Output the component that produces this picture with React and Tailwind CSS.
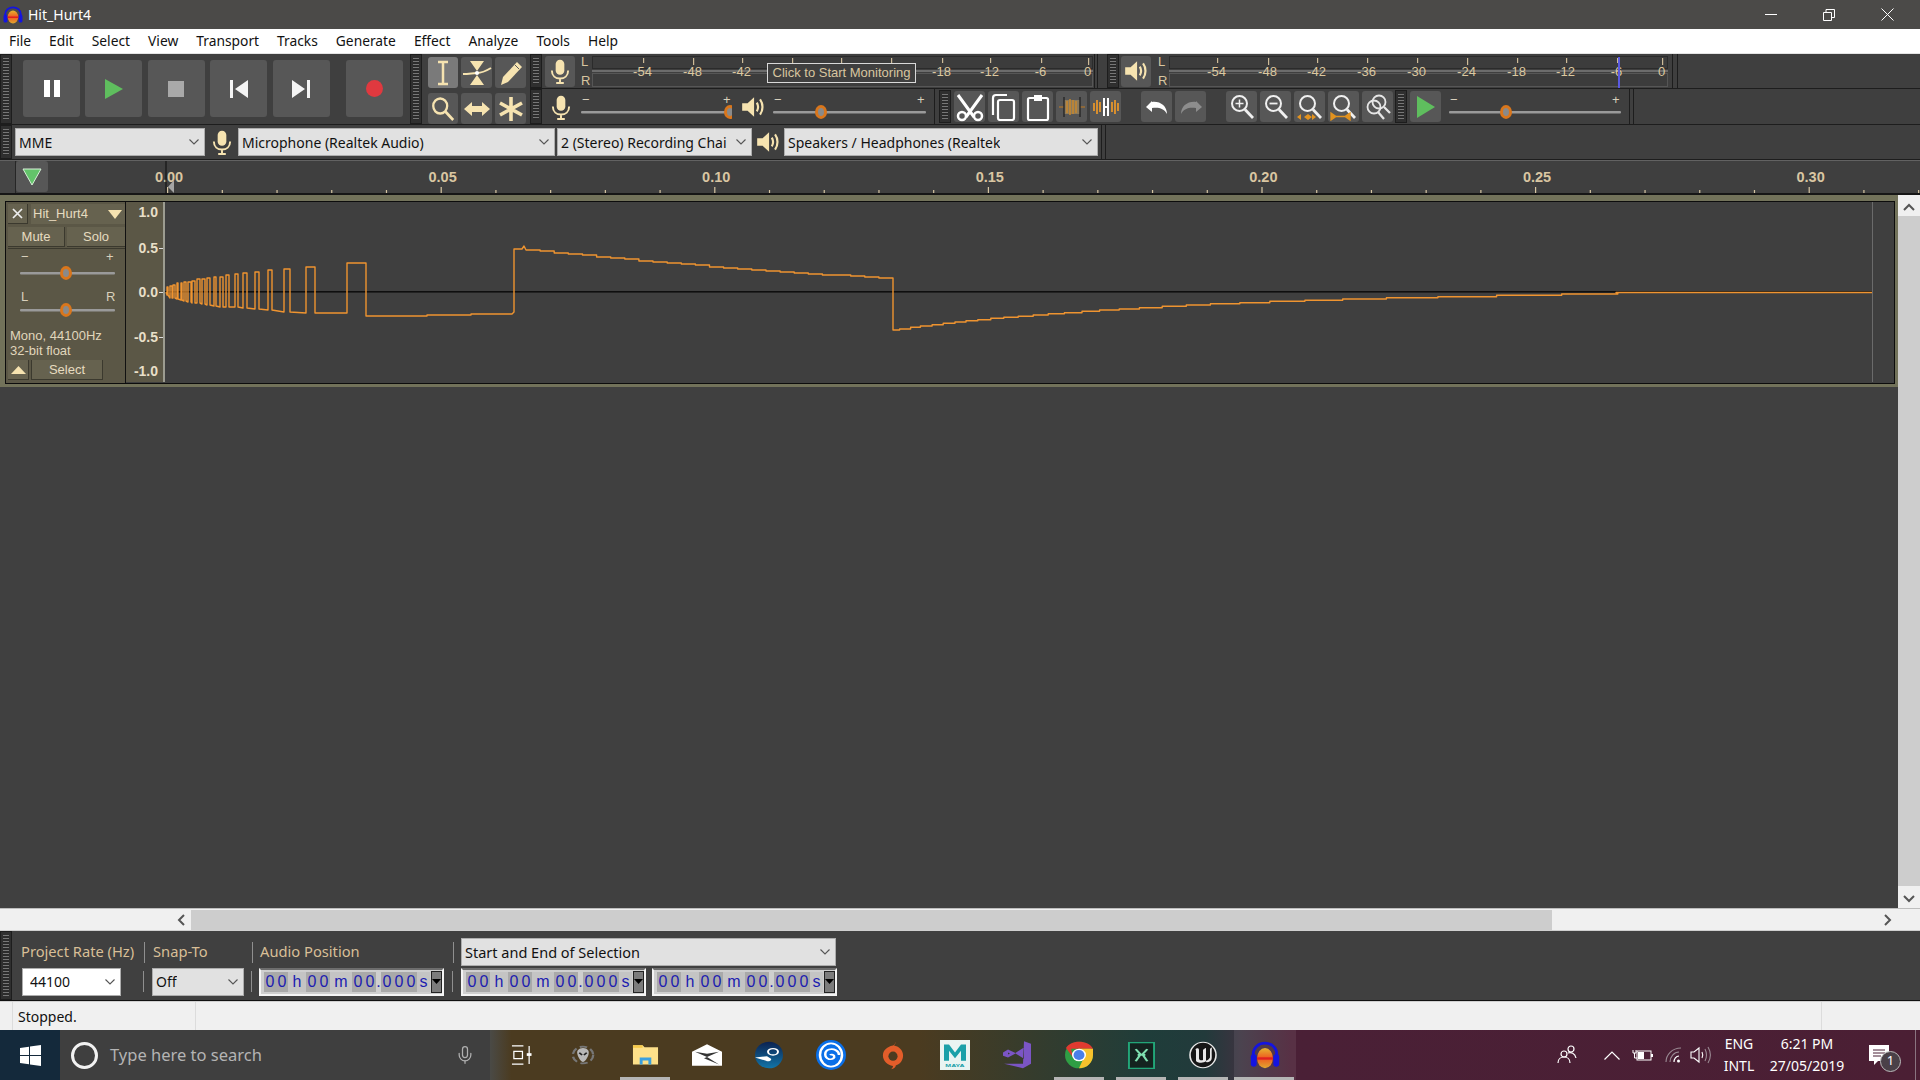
import React from "react";
import { Mic } from "lucide-react";

const NOTO = "font-['Noto_Sans',sans-serif]";
const ARIAL = "font-['Liberation_Sans',Arial,sans-serif]";
const CREAM = "#f6e3b0";
const TAN = "#dcc8a0";

function Grip({ h = "h-full" }) {
  return (
    <div className={`w-[12px] ${h} shrink-0 bg-[#2f2f2f] border border-[#1d1d1d] px-[2px] py-[3px]`}>
      <div className="w-full h-full bg-[repeating-linear-gradient(to_bottom,#777777_0,#777777_1px,#2b2b2b_1px,#2b2b2b_3px)]" />
    </div>
  );
}

function Btn({ w = "w-[31px]", h = "h-[31px]", on, className = "", children }) {
  return (
    <div className={`${w} ${h} shrink-0 rounded-[3px] flex items-center justify-center ${on ? "bg-[#7a7a7a]" : "bg-[#575757]"} ${className}`}>
      {children}
    </div>
  );
}

function I({ s = 24, w, h, vb = "0 0 24 24", children }) {
  return <svg width={w || s} height={h || s} viewBox={vb} preserveAspectRatio="none" className="block shrink-0">{children}</svg>;
}

const MicIcon = ({ c = CREAM, s = 26 }) => (
  <I s={s}>
    <rect x="8" y="1.5" width="8" height="14" rx="4" fill={c} />
    <path d="M4.5 11.5c0 5 3.5 7.5 7.5 7.5s7.5-2.5 7.5-7.5M12 19v4M8.5 23h7" fill="none" stroke={c} strokeWidth="1.8" />
  </I>
);

const SpeakerIcon = ({ s = 26 }) => (
  <I s={s}>
    <path d="M2 8.5h5L13 3v18l-6-5.5H2z" fill={CREAM} />
    <path d="M15.5 8c1.5 2.5 1.5 5.500 0 8M18.500 5c3 4 3 10 0 14" fill="none" stroke={CREAM} strokeWidth="2" />
  </I>
);

const Chevron = ({ c = "#555" }) => (
  <svg width="10" height="6" viewBox="0 0 10 6" className="block shrink-0"><path d="M.5.5 5 5 9.500.5" fill="none" stroke={c} strokeWidth="1.100" /></svg>
);

function Combo({ w, text, bg = "bg-[#e1e1e1]", font = "text-[14px]", border = "border-[#adadad]", pr = "pr-[5px]", pl = "pl-[3px]", h = "h-[28px]" }) {
  return (
    <div className={`${w} ${h} ${bg} ${pl} ${pr} border ${border} flex items-center justify-between shrink-0 ${NOTO} ${font} text-[#111]`}>
      <span className="whitespace-nowrap overflow-hidden">{text}</span>
      <Chevron />
    </div>
  );
}

function Slider({ w, t, left = "−", right = "+", lh = 35, line = 23, ly = 10 }) {
  return (
    <svg width={w} height={lh} viewBox={`0 0 ${w} ${lh}`} className="block shrink-0">
      <rect x="0" y={line - 1} width={w} height="2.500" rx="1" fill="#9a9a9a" />
      <text x="1" y={ly + 5} fontSize="13" fill="#d8d0bc" fontFamily="Liberation Sans">{left}</text>
      <text x={w - 9} y={ly + 5} fontSize="13" fill="#d8d0bc" fontFamily="Liberation Sans">{right}</text>
      <ellipse cx={t} cy={line} rx="4.500" ry="5.500" fill="#8a8a8a" stroke="#d9761c" strokeWidth="3" />
    </svg>
  );
}

function Meter({ w, x0, ticks, hide = [], children }) {
  const labels = ["-54", "-48", "-42", "-36", "-30", "-24", "-18", "-12", "-6", "0"];
  return (
    <div className="relative shrink-0" style={{ width: w, height: 34 }}>
      <svg width={w} height="34" viewBox={`0 0 ${w} 34`} className="block">
        <rect x="0.500" y="2.500" width={w - 1} height="12" fill="#3c3c3c" stroke="#2b2b2b" />
        <rect x="0.500" y="19.500" width={w - 1} height="13" fill="#3c3c3c" stroke="#565656" />
        <rect x="0" y="16" width={w} height="2" fill="#6c6c6c" />
        {ticks.map((x, i) => (
          <g key={i}>
            <rect x={x - x0} y="4" width="1.200" height={i === 1 || i === 5 || i === 9 ? 7 : 5} fill="#cdbb98" />
            {hide.includes(i) ? null : <text x={x - x0 - 0.500} y="22" fontSize="13" textAnchor="middle" fill={TAN} fontFamily="Liberation Sans">{labels[i]}</text>}
          </g>
        ))}
      </svg>
      {children}
    </div>
  );
}

const LR = () => (
  <div className={`w-[14px] pl-[3px] h-[34px] flex flex-col justify-between text-[13px] leading-[15px] text-[#d8c6a0] ${ARIAL} shrink-0`}>
    <span>L</span><span>R</span>
  </div>
);

function Mag({ children }) {
  return (
    <svg width="28" height="28" viewBox="0 0 28 28" className="block">
      <circle cx="11.500" cy="10.500" r="7.500" fill="none" stroke="#f0f0f0" strokeWidth="2" />
      <path d="M17 16.500 25 25" stroke="#f0f0f0" strokeWidth="2.800" />
      {children}
    </svg>
  );
}

function Top() {
  return (
    <div className="flex h-[71px] bg-[#3f3f3f] border-b border-[#1d1d1d]">
      <Grip />
      <div className="w-[398px] flex pt-[6px] pl-[11px] shrink-0">
        <div className="flex gap-[5.400px]">
          <Btn w="w-[57px]" h="h-[57px]"><div className="flex gap-[4px]"><div className="w-[6px] h-[17px] bg-white" /><div className="w-[6px] h-[17px] bg-white" /></div></Btn>
          <Btn w="w-[57px]" h="h-[57px]"><I w={18} h={20} vb="0 0 18 20"><path d="M0 0 18 10 0 20z" fill="#5fbe5e" /></I></Btn>
          <Btn w="w-[57px]" h="h-[57px]"><div className="w-[16px] h-[16px] bg-[#a9a9a9]" /></Btn>
          <Btn w="w-[57px]" h="h-[57px]"><I w={18} h={18} vb="0 0 18 18"><path d="M0 0h3v18H0zM18 0v18L5 9z" fill="#f4f4f4" /></I></Btn>
          <Btn w="w-[57px]" h="h-[57px]"><I w={18} h={18} vb="0 0 18 18"><path d="M15 0h3v18h-3zM0 0v18L13 9z" fill="#f4f4f4" /></I></Btn>
        </div>
        <Btn w="w-[57px]" h="h-[57px]" className="ml-[16px]"><div className="w-[17px] h-[17px] rounded-full bg-[#e0393f]" /></Btn>
      </div>
      <Grip />
      <div className="w-[108px] shrink-0 pl-[6px] pt-[3px] grid grid-cols-[30px_31px_31px] gap-x-[3px] gap-y-[5px] content-start">
        <Btn w="w-[30px]" on><I w={22} h={28} vb="0 0 22 28"><path d="M6 3h10M6 25h10M11 3v22" stroke={CREAM} strokeWidth="2.500" fill="none" /></I></Btn>
        <Btn><I w={30} h={28} vb="0 0 30 28"><path d="M8 2h14l-7 10zM8 26h14l-7-10z" fill={CREAM} /><path d="M1 15c6 0 10-1 14-1s9-2 14-5" stroke={CREAM} strokeWidth="2" fill="none" /><circle cx="15" cy="14" r="2" fill="#fff" /></I></Btn>
        <Btn><I w={28} h={28} vb="0 0 28 28"><path d="M20 3l5 5L11 23l-7 3 2-8z" fill={CREAM} /><path d="M18 6l4 4" stroke="#575757" strokeWidth="1" /></I></Btn>
        <Btn w="w-[30px]"><I w={26} h={28} vb="0 0 28 28"><circle cx="11" cy="11" r="7.500" fill="none" stroke={CREAM} strokeWidth="2.500" /><path d="M16.500 16.500 25 25" stroke={CREAM} strokeWidth="3" /></I></Btn>
        <Btn><I w={28} h={20} vb="0 0 28 20"><path d="M1 10l8-7v4h10V3l8 7-8 7v-4H9v4z" fill={CREAM} /></I></Btn>
        <Btn><I w={28} h={28} vb="0 0 28 28"><path d="M14 2v24M3 8l22 12M25 8 3 20" stroke={CREAM} strokeWidth="3.600" /></I></Btn>
      </div>
      <div className="flex-1 flex flex-col min-w-0">
        <div className="h-[35px] flex items-center border-b border-[#1d1d1d]">
          <Grip />
          <Btn w="w-[30px]" h="h-[31px]" className="ml-[3px]"><MicIcon /></Btn>
          <div className="ml-[3px]"><LR /></div>
          <Meter w={501} x0={592} hide={[3, 4, 5]} ticks={[643, 693, 742, 792, 841, 891, 942, 990, 1041, 1088]}>
            <div className={`absolute left-[175px] top-[9px] w-[149px] h-[20px] bg-[#3f3f3f] border-[1.500px] border-[#d8d8d8] flex items-center justify-center text-[13px] text-[#d8c6a0] whitespace-nowrap ${ARIAL}`}>Click to Start Monitoring</div>
          </Meter>
          <div className="w-[4px] h-full ml-[1px] border-x border-[#1d1d1d]" />
          <div className="ml-[9px] h-full"><Grip /></div>
          <Btn w="w-[30px]" h="h-[31px]" className="ml-[2px]"><SpeakerIcon /></Btn>
          <div className="ml-[4px]"><LR /></div>
          <Meter w={499} x0={1170} ticks={[1218, 1269, 1318, 1368, 1418, 1468, 1518, 1567, 1618, 1663]}>
            <div className="absolute left-[449px] top-[3px] w-[1.500px] h-[31px] bg-[#5a5ae0]" />
          </Meter>
          <div className="w-[6px] h-full ml-[4px] border-x border-[#1d1d1d]" />
        </div>
        <div className="flex-1 flex items-center min-h-0">
          <Grip />
          <div className="w-[40px] flex justify-center ml-[-1px] shrink-0"><MicIcon /></div>
          <Slider w={151} t={149} />
          <div className="w-[41px] flex justify-center shrink-0"><SpeakerIcon /></div>
          <Slider w={153} t={48} />
          <div className="w-[1px] h-full ml-[8px] bg-[#1d1d1d]" />
          <div className="ml-[4px]"><Grip h="h-[33px]" /></div>
          <div className="ml-[3px] flex gap-[3px]">
            <Btn><I s={30} vb="0 0 30 30"><path d="M3 3l16 22M27 3 11 25" stroke="#fff" strokeWidth="3" /><circle cx="7" cy="24" r="4" fill="none" stroke="#fff" strokeWidth="2.500" /><circle cx="23" cy="24" r="4" fill="none" stroke="#fff" strokeWidth="2.500" /></I></Btn>
            <Btn><I s={28} vb="0 0 28 28"><path d="M17 2H6a3 3 0 0 0-3 3v17" fill="none" stroke="#fff" strokeWidth="2.200" /><rect x="8" y="7" width="16" height="20" rx="2" fill="none" stroke="#fff" strokeWidth="2.200" /></I></Btn>
            <Btn><I s={28} vb="0 0 28 28"><rect x="4" y="5" width="20" height="22" rx="1.500" fill="none" stroke="#fff" strokeWidth="2.200" /><rect x="10" y="2" width="8" height="6" fill="#fff" /></I></Btn>
            <Btn><I s={26} vb="0 0 26 26"><path d="M0 13h5M21 13h5" stroke="#c27a20" strokeWidth="1.200" /><rect x="5" y="6" width="16" height="14" fill="#8c7b5c" /><path d="M8 7v12M11 5v16M14 6v14M17 7v12" stroke="#c8882c" strokeWidth="1.500" /><path d="M5 3v20M21 3v20" stroke="#2a2a2a" strokeWidth="1.500" /></I></Btn>
            <Btn><I s={28} vb="0 0 28 28"><path d="M2 10v8M5 7v14M8 9v10M20 9v10M23 7v14M26 10v8" stroke="#e5952c" strokeWidth="1.800" /><path d="M12 5v18M16 5v18M12 14h4" stroke="#fff" strokeWidth="2" /></I></Btn>
          </div>
          <div className="ml-[20px] flex gap-[3px]">
            <Btn><I s={28} vb="0 0 28 28"><path d="M9 8 3 14l6 5v-4c6-1 12 0 15 6 0-8-7-13-15-12z" fill="#fff" /></I></Btn>
            <Btn><I s={28} vb="0 0 28 28"><path d="M19 8l6 6-6 5v-4c-6-1-12 0-15 6 0-8 7-13 15-12z" fill="#8d8d8d" /></I></Btn>
          </div>
          <div className="ml-[20px] flex gap-[3px]">
            <Btn><Mag><path d="M7.500 10.500h8M11.500 6.500v8" stroke="#f0f0f0" strokeWidth="1.500" /></Mag></Btn>
            <Btn><Mag><path d="M7.500 10.500h8" stroke="#f0f0f0" strokeWidth="1.800" /></Mag></Btn>
            <Btn><Mag><path d="M1 24l4-3v6zM20 24l-4-3v6zM8 24l4-3 4 3-4 3z" fill="#e3931f" /></Mag></Btn>
            <Btn><Mag><path d="M1 20v7l5-3.500zM20 20v7l-5-3.500zM5 23.500h11" fill="#e3931f" stroke="#e3931f" strokeWidth="1.300" /></Mag></Btn>
            <Btn><I s={28} vb="0 0 28 28"><circle cx="10" cy="14" r="6.500" fill="none" stroke="#e6e6e6" strokeWidth="1.800" /><circle cx="15" cy="9" r="6.500" fill="none" stroke="#e6e6e6" strokeWidth="1.800" /><path d="M14 19l6 7M20 14l6 6" stroke="#e6e6e6" strokeWidth="2.300" /></I></Btn>
          </div>
          <div className="ml-[2px]"><Grip h="h-[33px]" /></div>
          <Btn className="ml-[3px]"><I w={20} h={24} vb="0 0 20 24"><path d="M1 1 19 12 1 23z" fill="#5fbe5e" /></I></Btn>
          <div className="ml-[8px]"><Slider w={172} t={57} /></div>
          <div className="w-[5px] h-full ml-[8px] border-x border-[#1d1d1d]" />
        </div>
      </div>
    </div>
  );
}

function Devices() {
  return (
    <div className="h-[35px] flex items-center bg-[#3f3f3f] border-b border-[#1d1d1d]">
      <Grip />
      <div className="ml-[3px]"><Combo w="w-[190px]" text="MME" /></div>
      <div className="w-[33px] flex justify-center shrink-0"><MicIcon /></div>
      <Combo w="w-[317px]" text="Microphone (Realtek Audio)" />
      <div className="ml-[2px]"><Combo w="w-[195px]" text="2 (Stereo) Recording Chai" pr="pr-[5px]" /></div>
      <div className="w-[32px] flex justify-center shrink-0"><SpeakerIcon /></div>
      <Combo w="w-[314px]" text="Speakers / Headphones (Realtek" />
      <div className="w-[5px] h-full ml-[3px] border-x border-[#1d1d1d]" />
    </div>
  );
}

function Ruler() {
  const ticks = [];
  for (let i = 0; i < 33; i++) ticks.push(i);
  return (
    <div className="h-[35px] flex bg-[#3f3f3f] border-t border-[#626262] border-b-2 border-b-[#161616]">
      <div className="w-[16px] shrink-0 border-r border-[#262626] bg-[#454545]" />
      <Btn w="w-[32px]" h="h-[31px]" className="bg-[#555555]"><I w={22} h={18} vb="0 0 22 18"><path d="M2 1h18L11 17z" fill="#63c36a" stroke="#d8f0d8" strokeWidth="1" /></I></Btn>
      <svg width="1872" height="33" viewBox="48 0 1872 33" className="block shrink-0">
        {ticks.map((i) => {
          const x = 167 + i * 54.72;
          const major = i % 5 === 0;
          return <rect key={i} x={x} y={major ? 26 : 29} width="1.200" height={major ? 6 : 3} fill="#d6c5a2" />;
        })}
        {["0.00", "0.05", "0.10", "0.15", "0.20", "0.25", "0.30"].map((t, i) => (
          <text key={t} x={169 + i * 273.6} y="21" textAnchor="middle" fontSize="14.500" fontWeight="700" fill="#d9c6a2" fontFamily="Liberation Sans">{t}</text>
        ))}
        <rect x="165.500" y="0" width="1" height="33" fill="#0c0c0c" />
        <path d="M174 19v13l-6-6z" fill="#a5a5a5" />
      </svg>
    </div>
  );
}

function PBtn({ w, children, className = "" }) {
  return (
    <div className={`${w} shrink-0 h-[20px] bg-[#66624f] border-r border-b border-[#3b392e] flex items-center justify-center text-[13px] text-[#e6dcc0] ${ARIAL} ${className}`}>{children}</div>
  );
}

function TrackPanel() {
  return (
    <div className="w-[120px] h-full shrink-0 bg-[#5b5746] flex flex-col pl-[2px] pt-[2px] border-r border-[#111]">
      <div className="flex gap-[3px]">
        <PBtn w="w-[20px]"><I s={13} vb="0 0 13 13"><path d="M2 2l9 9M11 2l-9 9" stroke="#eee" strokeWidth="1.700" /></I></PBtn>
        <div className="flex-1 h-[20px] bg-[#66624f] flex items-center justify-between pl-[2px] pr-[3px] text-[13px] text-[#e6dcc0]">
          <span className={ARIAL}>Hit_Hurt4</span>
          <I w={14} h={9} vb="0 0 14 9"><path d="M0 0h14L7 9z" fill={CREAM} /></I>
        </div>
      </div>
      <div className="flex gap-[2px] mt-[3px]">
        <PBtn w="w-[57px]">Mute</PBtn>
        <PBtn w="flex-1" className="border-r-0">Solo</PBtn>
      </div>
      <div className="mt-[1px] border-t border-[#3b392e] pl-[12px]">
        <Slider w={95} t={46} lh={35} line={24} ly={7} />
        <Slider w={95} t={46} lh={36} line={26} ly={12} left="L" right="R" />
      </div>
      <div className={`mt-[8px] ml-[2px] text-[13px] leading-[15px] text-[#e0d6bc] ${ARIAL}`}>
        <div>Mono, 44100Hz</div>
        <div>32-bit float</div>
      </div>
      <div className="flex gap-[2px] mt-[2px]">
        <PBtn w="w-[21px]"><I w={15} h={8} vb="0 0 15 8"><path d="M7.500 0 15 8H0z" fill={CREAM} /></I></PBtn>
        <PBtn w="w-[72px]" className="border-l border-[#3b392e]">Select</PBtn>
      </div>
    </div>
  );
}

function YAxis() {
  const items = [["1.0", 212 - 202, 0], ["0.5", 248 - 202, 1], ["0.0", 292 - 202, 1], ["-0.5", 337 - 202, 1], ["-1.0", 371 - 202, 0]];
  return (
    <svg width="39" height="180" viewBox="0 0 39 180" className="block shrink-0 bg-[#5b5746]">
      {items.map(([t, y, tick]) => (
        <g key={t}>
          <text x="32" y={y + 5} textAnchor="end" fontSize="14" fontWeight="700" fill="#e8dfc8" fontFamily="Liberation Sans">{t}</text>
          {tick ? <rect x="33" y={y} width="4" height="1" fill="#ddd" /> : null}
        </g>
      ))}
      <rect x="37" y="0" width="2" height="180" fill="#9c9c90" />
    </svg>
  );
}

function buildWave() {
  const r = [
    [167, 168, 287, 295], [170, 172, 286, 298], [173, 175, 285, 298], [177, 178, 283, 299], [181, 182, 283, 300],
    [184, 186, 282, 301], [188, 191, 282, 302], [192, 195, 281, 303], [197, 200, 279, 303], [202, 205, 279, 304],
    [207, 210, 278, 305], [214, 216, 277, 306], [220, 223, 277, 307], [226, 229, 275, 307], [235, 238, 274, 307],
    [243, 247, 273, 308], [255, 259, 272, 309], [268, 272, 270, 310], [284, 290, 269, 312], [306, 315, 267, 313], [347, 366, 263, 313],
  ];
  let d = "M166 292";
  r.forEach(([a, b, t, bot]) => {
    d += `L${a} ${bot}L${a} ${t}L${b} ${t}L${b} ${bot}`;
  });
  d += "L366 316L427 316L427 315L471 315L471 314L512 314L514 312L514 249L522 249L524 246L526 250";
  let py = 250;
  for (let k = 1; k <= 26; k++) {
    const x = 526 + (k * 367) / 26;
    const y = Math.round(250 + (29 * k) / 26 + 2 * Math.sin((Math.PI * k) / 26));
    d += `L${x.toFixed(1)} ${py}L${x.toFixed(1)} ${y}`;
    py = y;
  }
  d += "L893 330";
  const steps = [[30, 177], [47, 172], [62, 168], [80, 164], [97, 160], [115, 156], [132, 152], [150, 149], [170, 145], [190, 142], [212, 139], [235, 135], [258, 131], [283, 128], [310, 124], [337, 120], [367, 117], [398, 113], [433, 109], [470, 105], [507, 101], [552, 98], [598, 94], [652, 91], [710, 87], [777, 83], [856, 80], [946, 76], [1046, 72], [1132, 69]];
  let prev = 330;
  steps.forEach(([X, Y]) => {
    const x = (880 + (X * 1020) / 1565).toFixed(1);
    const y = (270 + Y / 3).toFixed(1);
    d += `L${x} ${prev}L${x} ${y}`;
    prev = y;
  });
  d += "L1616 292.5L1873 292.5";
  return d;
}

function Waveform() {
  return (
    <svg width="1708" height="180" viewBox="165 202 1708 180" className="block shrink-0">
      <rect x="165" y="291" width="1708" height="1.600" fill="#0f0f0f" />
      <path d={buildWave()} fill="none" stroke="#ef9430" strokeWidth="1.400" strokeLinejoin="round" />
      <rect x="1872" y="202" width="1" height="180" fill="#6b6b6b" />
    </svg>
  );
}

function Main() {
  return (
    <div className="flex-1 flex min-h-0">
      <div className="flex-1 bg-[#404040] min-w-0">
        <div className="h-[192px] bg-[#72725a] pt-[6px] pb-[3px] pl-[5px] pr-[3px]">
          <div className="h-full bg-[#3f3f3f] border border-[#0c0c0c] flex overflow-hidden">
            <TrackPanel />
            <YAxis />
            <Waveform />
          </div>
        </div>
      </div>
      <div className="w-[22px] bg-[#f0f0f0] flex flex-col items-center pt-[8px] shrink-0">
        <svg width="12" height="8" viewBox="0 0 12 8" className="block"><path d="M1 7 6 2l5 5" fill="none" stroke="#555" strokeWidth="2" /></svg>
        <div className="w-full h-[670px] mt-[5px] bg-[#cdcdcd]" />
        <svg width="12" height="8" viewBox="0 0 12 8" className="block mt-[9px]"><path d="M1 1l5 5 5-5" fill="none" stroke="#555" strokeWidth="2" /></svg>
      </div>
    </div>
  );
}

function HScroll() {
  return (
    <div className="h-[23px] bg-[#f0f0f0] flex items-center border-t border-[#bdbdbd] border-b border-b-[#cfcfcf]">
      <div className="w-[191px] shrink-0 flex justify-end pr-[6px]">
        <svg width="8" height="12" viewBox="0 0 8 12" className="block"><path d="M7 1 2 6l5 5" fill="none" stroke="#555" strokeWidth="2" /></svg>
      </div>
      <div className="w-[1361px] h-[20px] bg-[#cdcdcd] shrink-0" />
      <div className="flex-1 flex justify-end pr-[28px]">
        <svg width="8" height="12" viewBox="0 0 8 12" className="block"><path d="M1 1l5 5-5 5" fill="none" stroke="#555" strokeWidth="2" /></svg>
      </div>
    </div>
  );
}

const Sep = ({ className = "" }) => <div className={`w-[1px] h-[21px] bg-[#8f8f8f] shrink-0 ${className}`} />;

function Num() {
  const D = ({ n }) => (
    <span className="inline-flex bg-[#a9a9a9] h-[20px] items-center">
      {n.split("").map((c, i) => <span key={i} className="w-[12px] text-center">{c}</span>)}
    </span>
  );
  const L = ({ t, w }) => <span className={`${w} h-[20px] flex items-center justify-center bg-[#c4c4c4]`}>{t}</span>;
  return (
    <div className={`h-[28px] bg-[#cfcfcf] border-2 border-[#f4f4f4] border-t-[#6d6d6d] flex items-center pl-[3px] text-[16px] text-[#1c1cb0] ${ARIAL} shrink-0 w-[185px]`}>
      <D n="00" /><L t="h" w="w-[18px]" /><D n="00" /><L t="m" w="w-[22px]" /><D n="00" />
      <span className="w-[5px] text-center">.</span>
      <D n="000" /><L t="s" w="w-[13px]" />
      <div className="w-[11px] h-[22px] ml-[1px] bg-[#7c7c7c] border border-[#222] flex items-center justify-center shrink-0">
        <svg width="9" height="5" viewBox="0 0 9 5" className="block"><path d="M0 0h9L4.500 5z" fill="#000" /></svg>
      </div>
    </div>
  );
}

function Selection() {
  return (
    <div className="h-[70px] bg-[#404040] flex border-b border-[#111]">
      <Grip />
      <div className="flex flex-col pt-[7px] pl-[9px]">
        <div className={`flex items-center h-[28px] text-[14.700px] leading-[18px] text-[#d8bf97] ${NOTO} whitespace-nowrap`}>
          <span className="w-[123px] pb-[2px]">Project Rate (Hz)</span>
          <Sep />
          <span className="w-[107px] pl-[8px] pb-[2px]">Snap-To</span>
          <Sep />
          <span className="w-[200px] pl-[7px] pb-[2px]">Audio Position</span>
          <Sep />
          <div className="ml-[7px]"><Combo w="w-[375px]" text="Start and End of Selection" font="text-[14.500px]" /></div>
        </div>
        <div className="flex items-center h-[29px] mt-[1px]">
          <div className="ml-[1px]"><Combo w="w-[99px]" text="44100" bg="bg-white" pl="pl-[7px]" /></div>
          <Sep className="ml-[22px]" />
          <div className="ml-[8px]"><Combo w="w-[92px]" text="Off" /></div>
          <Sep className="ml-[7px]" />
          <div className="ml-[7px]"><Num /></div>
          <Sep className="ml-[8px]" />
          <div className="ml-[8px]"><Num /></div>
          <div className="ml-[6px]"><Num /></div>
        </div>
      </div>
    </div>
  );
}

function Status() {
  return (
    <div className="h-[29px] bg-[#f0f0f0] flex border-t border-[#d0d0d0]">
      <div className="w-[184px] ml-[12px] border-x border-[#dcdcdc] pl-[5px] flex items-center">
        <span className={`text-[14px] text-[#111] ${NOTO}`}>Stopped.</span>
      </div>
      <div className="w-[1626px] border-r border-[#dcdcdc]" />
    </div>
  );
}

function TI({ children, bar, wide, active }) {
  return (
    <div className={`w-[62px] h-full shrink-0 relative flex items-center justify-center ${active ? "bg-[#ffffff14]" : ""}`}>
      {children}
      {bar ? <div className={`absolute bottom-0 h-[3px] bg-[#b5b5b5] ${wide ? "left-0 right-[2px]" : "left-[6px] right-[6px]"}`} /> : null}
    </div>
  );
}

const AudacityLogo = ({ w = 30, h = 26 }) => (
  <svg width={w} height={h} viewBox="0 0 36 36" preserveAspectRatio="none" className="block">
    <defs>
      <linearGradient id="aud" x1="0" y1="0" x2="0" y2="1">
        <stop offset="0" stopColor="#e5b530" /><stop offset=".5" stopColor="#ee5a20" /><stop offset="1" stopColor="#e0a830" />
      </linearGradient>
    </defs>
    <path d="M4 24V17C4 -2 32 -2 32 17v7" fill="none" stroke="#1414e0" strokeWidth="3.500" />
    <rect x="1" y="17" width="7" height="16" rx="3" fill="#1414e0" />
    <rect x="28" y="17" width="7" height="16" rx="3" fill="#1414e0" />
    <ellipse cx="18" cy="22" rx="9.500" ry="13" fill="url(#aud)" />
    <rect x="8.500" y="21" width="19" height="3" fill="#e02020" />
  </svg>
);

function Taskbar() {
  return (
    <div className="h-[50px] flex shrink-0">
      <div className="w-[60px] bg-[#14293b] flex items-center justify-center shrink-0">
        <svg width="21" height="21" viewBox="0 0 21 21" className="block"><path d="M0 3l9-1.300V10H0zM10 1.500 21 0v10H10zM0 11h9v8.300L0 18zM10 11h11v10l-11-1.500z" fill="#fff" /></svg>
      </div>
      <div className="w-[430px] bg-[#3f3f3f] flex items-center shrink-0 relative">
        <div className="ml-[11px] w-[27px] h-[27px] rounded-full border-[3px] border-[#f2f2f2]" />
        <span className={`ml-[12px] text-[16.500px] text-[#b4b4b4] ${NOTO}`}>Type here to search</span>
        <div className="ml-auto mr-[15px]"><Mic size={20} color="#b0b0b0" strokeWidth={1.500} /></div>
      </div>
      <div className="flex-1 flex bg-[linear-gradient(to_right,#4a4a46_0%,#4b3b20_1.500%,#4b3b20_30%,#1f3d3a_46%,#223a3b_50%,#3c3340_52.500%,#4a2036_56%,#4b1f34_100%)]">
        <TI><I w={21} h={20} vb="0 0 22 22"><path d="M1 1h12M1 21h12M3 7h9v8H3zM19 1v20" stroke="#fff" strokeWidth="1.300" fill="none" /><rect x="16.500" y="9" width="5" height="3" fill="#fff" /></I></TI>
        <TI><I w={26} h={26} vb="0 0 28 34"><circle cx="14" cy="17" r="11" fill="none" stroke="#777" strokeWidth="2.500" strokeDasharray="8 4" /><path d="M14 8c5 0 7 4 6 8-1 5-4 10-6 10s-5-5-6-10c-1-4 1-8 6-8z" fill="#b8b8b8" /><path d="M10 14l3 3M18 14l-3 3" stroke="#222" strokeWidth="2" /></I></TI>
        <TI bar><I w={27} h={23} vb="0 0 28 36"><path d="M1 2h10l2 3h14v27H1z" fill="#fde08a" /><rect x="1" y="2" width="10" height="4" fill="#f6c94a" /><path d="M8 32V21h12v11h-3v-6h-6v6z" fill="#3aa0e0" /></I></TI>
        <TI><I w={30} h={24} vb="0 0 30 38"><path d="M15 2 30 14v22H0V14z" fill="#fff" /><path d="M3 14l12 8 12-8-12 3z" fill="#333" /><path d="M15 22l12 12-15-10z" fill="#333" /></I></TI>
        <TI><I w={28} h={28} vb="0 0 28 44"><defs><linearGradient id="st" x1="0" y1="0" x2="0" y2="1"><stop offset="0" stopColor="#0b2150" /><stop offset="1" stopColor="#1275a8" /></linearGradient></defs><ellipse cx="14" cy="22" rx="14" ry="21" fill="url(#st)" /><circle cx="18" cy="17" r="5" fill="none" stroke="#fff" strokeWidth="2" /><path d="M0 26l11 5c2 2 6 0 5-3l-4-4z" fill="#fff" /></I></TI>
        <TI><I w={30} h={30} vb="0 0 30 44"><ellipse cx="15" cy="22" rx="15" ry="22" fill="#0a6fe8" /><ellipse cx="15" cy="22" rx="11" ry="17" fill="none" stroke="#fff" strokeWidth="2.500" /><path d="M23 22c0-6-5-10-10-8-5 2-5 12 0 14 4 1 6-2 5-5-1-2-3-2-4-1" fill="none" stroke="#fff" strokeWidth="2.500" /></I></TI>
        <TI><I w={22} h={29} vb="0 0 24 44"><path d="M15 1c-1 4-2 5-3 6C5 9 1 15 1 22c0 8 5 15 11 16 0 2-1 3-2 5 4-2 5-4 5-6 5-2 8-8 8-15 0-8-5-14-10-15 1-2 2-4 2-6z" fill="#e35d2a" /><ellipse cx="12" cy="23" rx="5" ry="7" fill="#4b3b20" /></I></TI>
        <TI><I w={30} h={30} vb="0 0 30 48"><rect width="30" height="48" fill="#e9f4f2" /><path d="M4 33V7h5l6 13 6-13h5v26h-5V17l-6 12-6-12v16z" fill="#19a0a8" /><text x="15" y="44" textAnchor="middle" fontSize="7" fontWeight="700" fill="#19a0a8" fontFamily="Liberation Sans">MAYA</text></I></TI>
        <TI><I w={30} h={30} vb="0 0 30 48"><path d="M22 2 29 6v32l-8 7L2 38l19 0zM1 20l5-5 8 6-8 7-5-3v-5zM6 20v3l2-1.500zM22 12 13 21l9 9z" fill="#7b55c5" fillRule="evenodd" /></I></TI>
        <TI bar><I w={28} h={28} vb="0 0 28 44"><ellipse cx="14" cy="22" rx="14" ry="21" fill="#2f9e44" /><path d="M14 1C8 1 3 5 1 11l7 15-2-14h22c-2-7-8-11-14-11z" fill="#e03a30" /><path d="M28 12H14l6 10-6 21c8 0 14-9 14-21 0-4 0-7 0-10z" fill="#f7c22c" /><ellipse cx="14" cy="22" rx="7" ry="10" fill="#fff" /><ellipse cx="14" cy="22" rx="5.500" ry="8" fill="#4a7fe8" /></I></TI>
        <TI bar><I w={27} h={27} vb="0 0 28 42"><rect x="1" y="1" width="26" height="40" fill="#14231f" stroke="#22a678" strokeWidth="2" /><path d="M8 11l5 8-5 11M20 11l-5 8 5 11M10 20h8" stroke="#7fe0b0" strokeWidth="2.500" fill="none" /></I></TI>
        <TI bar><I w={28} h={28} vb="0 0 28 44"><ellipse cx="14" cy="22" rx="13" ry="20" fill="#161616" stroke="#e8e8e8" strokeWidth="1.600" /><path d="M7 12c3-2 3 1 3 3v12c0 3 2 4 4 3V14c1-2 3-3 3-3v20c2 0 3-3 4-5l0-14 2-2c-1 12 1 20-2 22-2 2-4 2-4 0-2 3-9 3-10-1V15c0-1-1-2 0-3z" fill="#e8e8e8" /></I></TI>
        <TI bar wide active><AudacityLogo w={30} h={28} /></TI>
        <div className="ml-auto flex h-full items-center text-white">
          <div className="w-[44px] flex justify-center"><svg width="20" height="20" viewBox="0 0 20 20" className="block"><circle cx="7" cy="9" r="3" fill="none" stroke="#fff" strokeWidth="1.200" /><path d="M1 18c0-4 3-6 6-6s6 2 6 6" fill="none" stroke="#fff" strokeWidth="1.200" /><circle cx="14" cy="4" r="3" fill="none" stroke="#fff" strokeWidth="1.200" /><path d="M11 8c3-1 7 0 8 5" fill="none" stroke="#fff" strokeWidth="1.200" /></svg></div>
          <div className="w-[24px] ml-[11px] flex justify-center"><svg width="16" height="9" viewBox="0 0 16 9" className="block"><path d="M.5 8.500 8 1l7.500 7.500" fill="none" stroke="#fff" strokeWidth="1.200" /></svg></div>
          <div className="w-[36px] flex justify-center"><svg width="21" height="13" viewBox="0 0 21 13" className="block"><rect x="5" y="2" width="14" height="9" fill="none" stroke="#fff" /><rect x="6" y="3" width="6" height="7" fill="#fff" /><rect x="19" y="5" width="2" height="3" fill="#fff" /><path d="M1 1v3h3V1M2.500 4v5h3" stroke="#fff" fill="none" /></svg></div>
          <div className="w-[26px] flex justify-center"><svg width="17" height="16" viewBox="0 0 17 16" className="block"><path d="M1 15C1 8 7 1 16 1M5 15c0-5 4-10 9-10" fill="none" stroke="#9b8b94" strokeWidth="1.100" /><path d="M9 15c0-3 2-6 5-6" fill="none" stroke="#fff" strokeWidth="1.200" /><circle cx="13.500" cy="14" r="1.500" fill="#fff" /></svg></div>
          <div className="w-[28px] flex justify-center"><svg width="21" height="18" viewBox="0 0 21 18" className="block"><path d="M1 6h3l5-4v14l-5-4H1z" fill="none" stroke="#fff" strokeWidth="1.100" /><path d="M12 6c1 2 1 4 0 6" fill="none" stroke="#fff" strokeWidth="1.100" /><path d="M15 3c2 4 2 8 0 12M18 1c3 5 3 11 0 16" fill="none" stroke="#9b8b94" strokeWidth="1.100" /></svg></div>
          <div className={`w-[50px] text-center text-[14px] leading-[22px] ${NOTO}`}><div>ENG</div><div>INTL</div></div>
          <div className={`w-[86px] text-center text-[14px] leading-[22px] ${NOTO}`}><div>6:21 PM</div><div>27/05/2019</div></div>
          <div className="w-[60px] flex justify-center relative">
            <svg width="22" height="21" viewBox="0 0 22 21" className="block"><path d="M0 0h20v16H9l-4 4v-4H0z" fill="#fff" /><path d="M4 5h12M4 8h12M4 11h8" stroke="#4a2036" strokeWidth="1" /></svg>
            <div className={`absolute left-[30px] top-[6px] w-[21px] h-[21px] rounded-full bg-[#4a4048] border border-[#bbb] flex items-center justify-center text-[13px] ${NOTO}`}>1</div>
          </div>
          <div className="w-[10px] h-full flex justify-center"><div className="w-[1px] h-full bg-[#8a7480]" /></div>
        </div>
      </div>
    </div>
  );
}

export default function App() {
  const menu = ["File", "Edit", "Select", "View", "Transport", "Tracks", "Generate", "Effect", "Analyze", "Tools", "Help"];
  return (
    <div className="w-[1920px] h-[1080px] flex flex-col overflow-hidden bg-[#404040]">
      <div className="h-[29px] bg-[#4b4a48] flex items-center shrink-0 text-white">
        <div className="ml-[3px]"><AudacityLogo w={20} h={18} /></div>
        <span className={`ml-[5px] text-[14px] ${NOTO}`}>Hit_Hurt4</span>
        <div className="ml-auto flex items-center">
          <div className="w-[58px] flex justify-center"><div className="w-[12px] h-[1px] bg-white" /></div>
          <div className="w-[58px] flex justify-center"><svg width="12" height="12" viewBox="0 0 12 12" className="block"><path d="M.5 3.500h8v8h-8zM3 3.500V.5h8.500v8H8.500" fill="none" stroke="#fff" /></svg></div>
          <div className="w-[58px] flex justify-center mr-[4px]"><svg width="13" height="13" viewBox="0 0 13 13" className="block"><path d="M.5.5l12 12M12.500.5l-12 12" stroke="#fff" /></svg></div>
        </div>
      </div>
      <div className={`h-[25px] bg-white flex items-center gap-[18px] pl-[9px] shrink-0 border-b border-[#e4e4e4] text-[13.800px] text-[#111] ${NOTO}`}>
        {menu.map((m) => <span key={m}>{m}</span>)}
      </div>
      <Top />
      <Devices />
      <Ruler />
      <Main />
      <HScroll />
      <Selection />
      <Status />
      <Taskbar />
    </div>
  );
}
